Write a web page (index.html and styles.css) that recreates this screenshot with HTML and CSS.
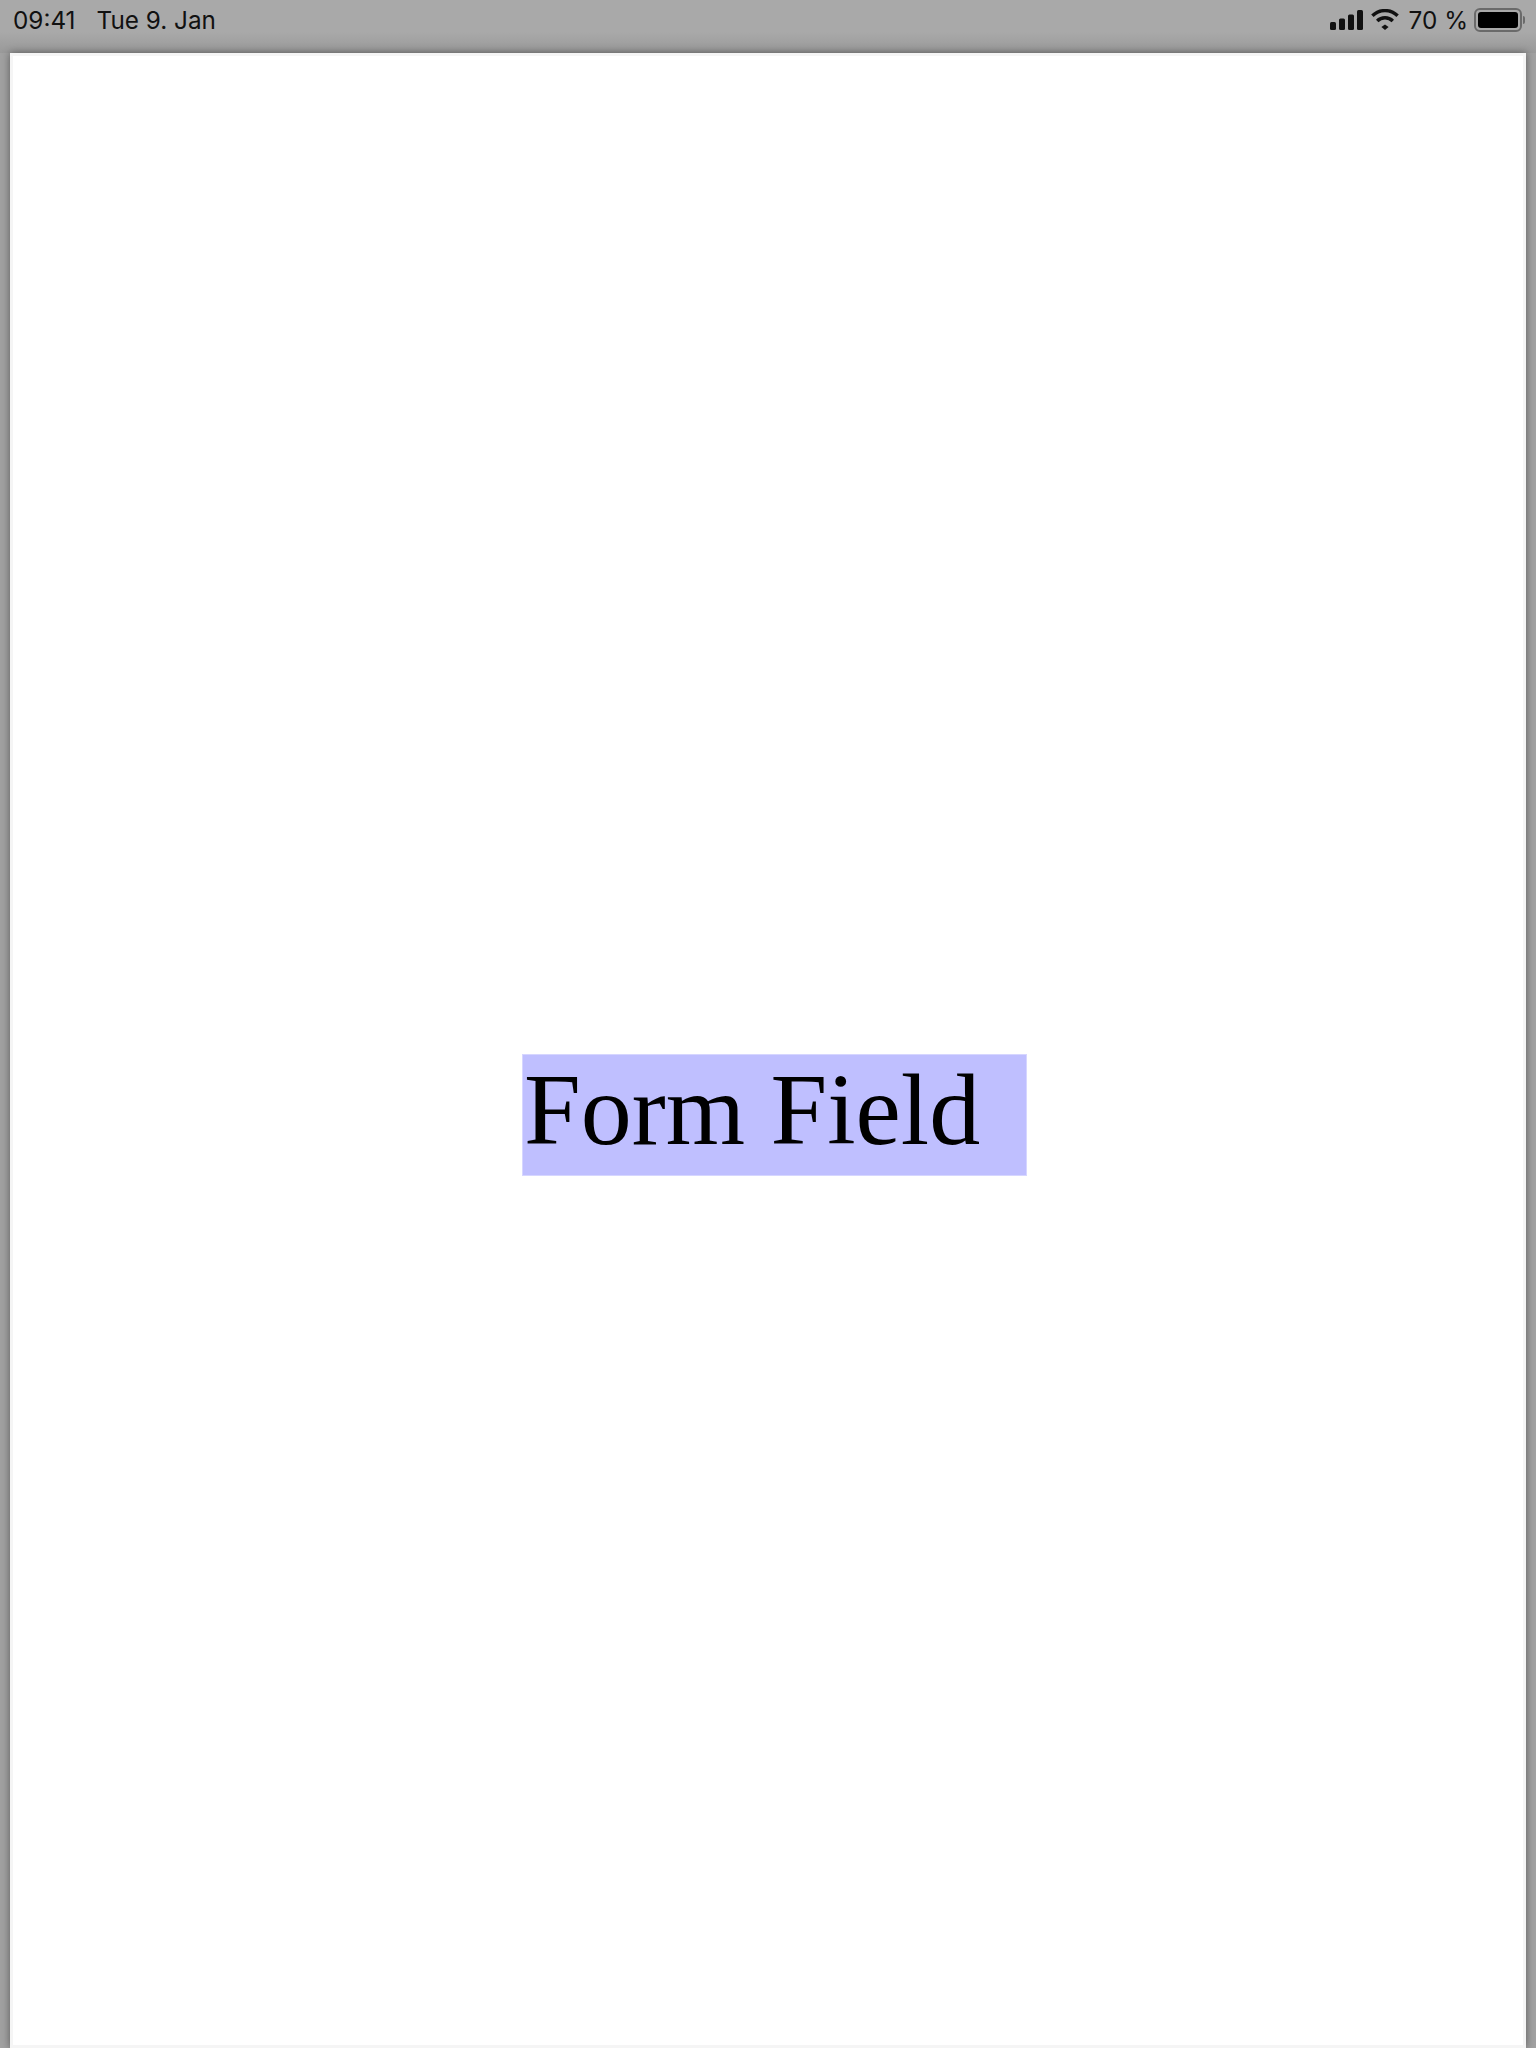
FILE: index.html
```html
<!DOCTYPE html>
<html lang="en">
<head>
    <meta charset="UTF-8">
    <meta name="viewport" content="width=device-width, initial-scale=1.0">
    <title>Form Field</title>
    <link rel="stylesheet" href="styles.css">
</head>
<body>
    <div class="status-bar">
        <div class="status-left">
            <span>09:41</span>
            <span>Tue 9. Jan</span>
        </div>
        <div class="status-right">
            <svg class="signal" width="33" height="20" viewBox="0 0 33 20">
                <rect x="0" y="12" width="6" height="8" rx="1.5"/>
                <rect x="9" y="8.5" width="6" height="11.5" rx="1.5"/>
                <rect x="18" y="4.5" width="6" height="15.5" rx="1.5"/>
                <rect x="27" y="0" width="6" height="20" rx="1.5"/>
            </svg>
            <svg class="wifi" width="28" height="21" viewBox="0 0 28 21">
                <path d="M14 15.5l3.6 2.4L14 21l-3.6-3.1z"/>
                <path d="M6.2 12a11 11 0 0 1 15.6 0" fill="none" stroke="#111" stroke-width="3.4"/>
                <path d="M1.4 6.8a17.8 17.8 0 0 1 25.2 0" fill="none" stroke="#111" stroke-width="3.4"/>
            </svg>
            <span class="percent">70 %</span>
            <div class="battery">
                <div class="battery-body"><div class="battery-level"></div></div>
                <div class="battery-cap"></div>
            </div>
        </div>
    </div>

    <div class="sheet">
        <div class="form-field">Form Field</div>
    </div>
</body>
</html>
```

FILE: styles.css
```css
html, body {
    height: 100%;
}

body {
    margin: 0;
    height: 2048px;
    overflow: hidden;
    background-color: #a1a1a1;
    font-family: "Inter", "Liberation Sans", sans-serif;
    color: #111;
}

/* top bar */
.status-bar {
    height: 53px;
    box-sizing: border-box;
    padding: 0 11px 14px 13px;
    display: flex;
    justify-content: space-between;
    align-items: center;
    font-size: 24.3px;
    background: linear-gradient(#a9a9a9, #a9a9a9 60%, #999);
}

.status-left {
    display: flex;
    gap: 21px;
}

.status-right {
    display: flex;
    align-items: center;
}

.wifi {
    margin: 0 10px 0 8px;
}

.signal {
    fill: #111;
}

.wifi {
    fill: #111;
}

.battery {
    display: flex;
    align-items: center;
    margin-left: 6px;
}

.battery-body {
    width: 48px;
    height: 24px;
    box-sizing: border-box;
    padding: 2px;
    border: 2px solid #6a6a6a;
    border-radius: 6px;
}

.battery-level {
    height: 100%;
    background-color: #000;
    border-radius: 3px;
}

.battery-cap {
    width: 2px;
    height: 8px;
    margin-left: 1px;
    background-color: #6a6a6a;
    border-radius: 0 2px 2px 0;
}

/* white page */
.sheet {
    height: 1995px;
    margin: 0 10px;
    padding-top: 1001px;
    box-sizing: border-box;
    background-color: #fff;
    box-shadow: 0 0 8px rgba(0, 0, 0, 0.45), inset 0 0 0 3px #f5f5f5;
}

.form-field {
    width: 505px;
    height: 122px;
    margin-left: 512px;
    border: 1px solid #d6d6ff;
    background-color: #bfbfff;
    font-family: "Liberation Serif", "Times New Roman", serif;
    font-size: 102px;
    line-height: 110px;
    color: #000;
    padding-left: 1px;
    box-sizing: border-box;
}
```
